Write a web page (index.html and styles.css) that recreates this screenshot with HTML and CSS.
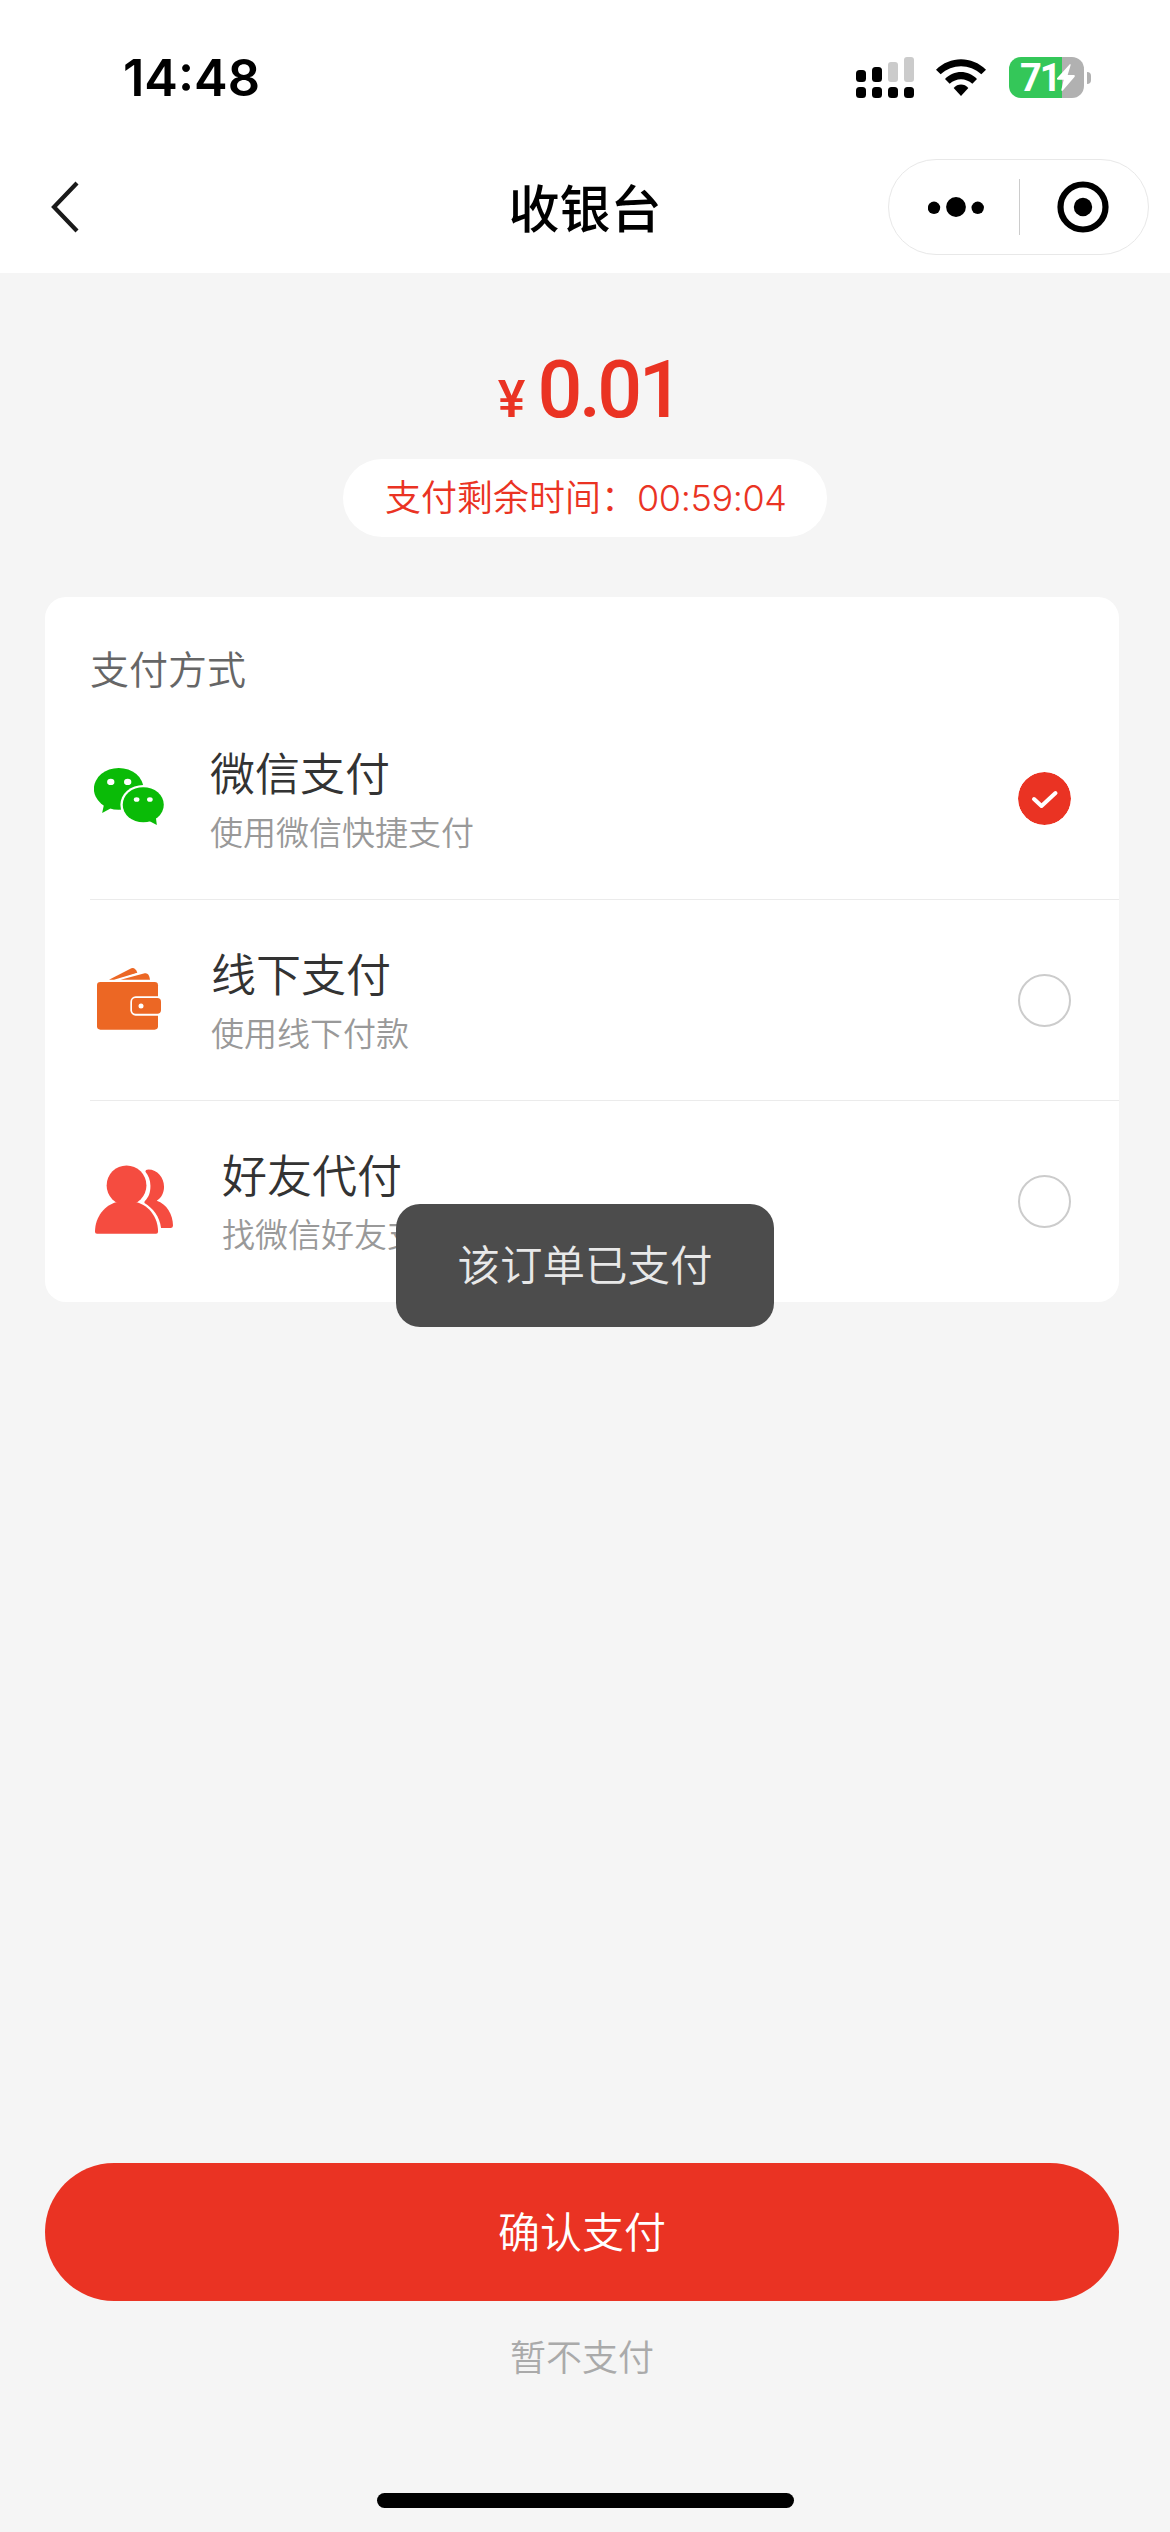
FILE: index.html
```html
<!DOCTYPE html>
<html lang="zh-CN">
  <head>
    <meta charset="UTF-8" />
    <meta name="viewport" content="width=device-width, initial-scale=1.0" />
    <title>收银台</title>
    <link rel="stylesheet" href="styles.css">
  </head>
  <body>
    <header class="header">
      <div class="status">
        <span class="status__time">14:48</span>
        <div class="status__icons">
          <svg class="status__signal" width="58" height="41" viewBox="0 0 58 41">
            <rect x="0" y="13" width="10" height="12" rx="3.5" />
            <rect x="16" y="10" width="10" height="15" rx="3.5" />
            <rect x="32" y="5" width="10" height="20" rx="3" fill="#cbcbcb" />
            <rect x="48" y="0" width="10" height="25" rx="3" fill="#cbcbcb" />
            <rect x="0" y="30" width="10" height="11" rx="3.5" />
            <rect x="16" y="30" width="10" height="11" rx="3.5" />
            <rect x="32" y="30" width="10" height="11" rx="3.5" />
            <rect x="48" y="30" width="10" height="11" rx="3.5" />
          </svg>
          <svg class="status__wifi" width="50" height="37" viewBox="0 0 150 111">
            <path d="M0 32 C42 -10 108 -10 150 32 L136 46 C101 14 49 14 14 46 Z" />
            <path d="M27 60 C54 32 96 32 123 60 L109 74 C89 56 61 56 41 74 Z" />
            <path d="M53 87 C65 73 85 73 97 87 L75 111 Z" />
          </svg>
          <div class="battery">
            <div class="battery__body">
              <span class="battery__num">71</span>
              <svg class="battery__bolt" width="18" height="27" viewBox="0 0 54 81">
                <path d="M39 0 L0 43 Q-1 47 3 47 H20 L13 78 Q14 83 18 79 L53 38 Q55 33 50 33 H32 L41 3 Q41 0 39 0 Z" />
              </svg>
            </div>
            <div class="battery__cap"></div>
          </div>
        </div>
      </div>
      <nav class="nav">
        <svg class="nav__back" width="28" height="52" viewBox="0 0 28 52">
          <path d="M26 2 L3 26 L26 50" />
        </svg>
        <h1 class="nav__title">收银台</h1>
        <div class="capsule">
          <svg class="capsule__more" width="56" height="20" viewBox="0 0 56 20">
            <circle cx="6" cy="10.8" r="6.2" />
            <circle cx="28" cy="10" r="9.9" />
            <circle cx="49.7" cy="10.8" r="6.2" />
          </svg>
          <i class="capsule__line"></i>
          <svg class="capsule__close" width="52" height="52" viewBox="0 0 52 52">
            <circle cx="26" cy="26" r="22.5" fill="none" stroke="#000" stroke-width="6.2" />
            <circle cx="26" cy="26" r="9.2" />
          </svg>
        </div>
      </nav>
    </header>

    <main class="main">
      <p class="price"><span class="price__unit">¥</span><span class="price__num">0.01</span></p>
      <p class="countdown">支付剩余时间：<span class="countdown__time">00:59:04</span></p>

      <section class="card">
        <h2 class="card__title">支付方式</h2>
        <ul class="pay">
          <li class="pay__item">
            <svg class="pay__icon pay__icon--wechat" width="70" height="57" viewBox="192 564 210 172" fill="#0abb07">
              <path d="M222 672 L216 700 L241 686 Z" />
              <ellipse cx="266" cy="627" rx="75" ry="63" />
              <ellipse cx="340" cy="675" rx="69" ry="60" fill="#fff" />
              <path d="M378 712 L381 736 L358 724 Z" />
              <ellipse cx="340" cy="675" rx="62" ry="53" />
              <g fill="#fff">
                <ellipse cx="242" cy="606" rx="11" ry="9.5" />
                <ellipse cx="293" cy="606" rx="11" ry="9.5" />
                <ellipse cx="320" cy="659" rx="8.5" ry="7" />
                <ellipse cx="360" cy="659" rx="8.5" ry="7" />
              </g>
            </svg>
            <div class="pay__text">
              <p class="pay__name">微信支付</p>
              <p class="pay__desc">使用微信快捷支付</p>
            </div>
            <svg class="radio radio--on" width="53" height="53" viewBox="0 0 53 53">
              <circle cx="26.5" cy="26.5" r="26.5" />
              <path d="M16 27 L23.5 34 L37.5 21" />
            </svg>
          </li>
          <li class="pay__item">
            <svg class="pay__icon pay__icon--wallet" width="64" height="63" viewBox="201 137 192 189" fill="#ec6724">
              <path d="M237 175 L304 141 Q315 137 322 154 L252 175 Z" />
              <path d="M262 175 L340 149 L344 156 L280 175 Z" fill="#fff" />
              <path d="M272 175 L344 156 Q357 153 360 175 Z" />
              <rect x="201" y="182" width="183" height="143" rx="10" />
              <rect x="301" y="225" width="100" height="58" rx="16" fill="#fff" />
              <rect x="306" y="230" width="87" height="47" rx="11" />
              <circle cx="333" cy="254" r="7.5" fill="#fff" />
            </svg>
            <div class="pay__text">
              <p class="pay__name">线下支付</p>
              <p class="pay__desc">使用线下付款</p>
            </div>
            <span class="radio"></span>
          </li>
          <li class="pay__item">
            <svg class="pay__icon pay__icon--friend" width="78" height="69" viewBox="194 735 235 207" fill="#f54c40">
              <circle cx="289" cy="796" r="60" />
              <path d="M194 936 C194 890 225 855 258 847 L320 847 C357 857 384 893 384 936 Q384 942 378 942 H200 Q194 942 194 936 Z" />
              <path d="M346 755 Q346 748 355 748 C382 748 402 772 402 800 C402 818 394 834 380 842 C410 852 429 883 429 917 Q429 924 423 924 H393 C389 890 368 864 343 849 Q342 845 345 842 C357 830 361 817 361 797 C361 780 355 766 346 755 Z" />
            </svg>
            <div class="pay__text">
              <p class="pay__name">好友代付</p>
              <p class="pay__desc">找微信好友支付</p>
            </div>
            <span class="radio"></span>
          </li>
        </ul>
      </section>
    </main>

    <footer class="footer">
      <button class="footer__confirm">确认支付</button>
      <a class="footer__cancel">暂不支付</a>
      <div class="home-bar"></div>
    </footer>

    <div class="toast">该订单已支付</div>
  </body>
</html>
```
FILE: styles.css
```css
* {
  box-sizing: border-box;
  margin: 0;
  padding: 0;
}

body {
  background-color: #f5f5f5;
  display: flex;
  flex-direction: column;
  font-family: Inter, "Noto Sans CJK SC", sans-serif;
  font-weight: 350;
  height: 2532px;
  position: relative;
  width: 1170px;
}

svg {
  display: block;
  flex: none;
}

/* header */
.header {
  background-color: #fff;
  height: 273px;
}

.status {
  align-items: center;
  display: flex;
  height: 155px;
  justify-content: space-between;
  padding: 0 79px 0 123px;
}

.status__time {
  font-size: 50.5px;
  font-weight: 600;
}

.status__icons {
  align-items: center;
  display: flex;
}

.status__wifi {
  margin-left: 22px;
}

.battery {
  align-items: center;
  display: flex;
  margin-left: 23px;
}

.battery__body {
  align-items: center;
  background: linear-gradient(90deg, #34c759 53px, #b1b1b1 53px);
  border-radius: 12px;
  color: #fff;
  display: flex;
  height: 41px;
  padding-left: 11px;
  width: 75px;
}

.battery__num {
  font-family: Roboto, sans-serif;
  font-size: 38px;
  font-weight: 700;
  letter-spacing: -2px;
  line-height: 41px;
  padding-top: 2px;
  width: 37px;
}

.battery__bolt {
  fill: #fff;
}

.battery__cap {
  background-color: #b1b1b1;
  border-radius: 0 6px 6px 0;
  height: 12px;
  margin-left: 3px;
  width: 4px;
}

.nav {
  align-items: center;
  display: grid;
  grid-template-columns: 1fr auto 1fr;
  height: 104px;
  padding: 0 21px 0 51px;
}

.nav__back {
  fill: none;
  stroke: #1a1a1a;
  stroke-width: 4.2;
}

.nav__title {
  font-size: 51px;
  font-weight: 500;
  line-height: 60px;
  padding: 5px 30px 0 0;
}

.capsule {
  align-items: center;
  border: 1.5px solid #e8e8e8;
  border-radius: 48px;
  display: flex;
  height: 96px;
  justify-self: end;
  padding-left: 39px;
  width: 261px;
}

.capsule__line {
  background-color: #ccc;
  height: 56px;
  margin: 0 37px 0 35px;
  width: 1px;
}

/* content */
.main {
  flex: 1;
  padding-top: 74px;
}

.price {
  align-items: baseline;
  color: #ea3323;
  display: flex;
  font-family: Roboto, sans-serif;
  font-weight: 500;
  height: 84px;
  justify-content: center;
  line-height: 87px;
  padding-left: 8px;
}

.price__unit {
  font-size: 52px;
  margin-right: 12px;
}

.price__num {
  font-size: 79px;
  letter-spacing: -3.5px;
}

.countdown {
  background-color: #fff;
  border-radius: 39px;
  color: #ea3323;
  font-size: 36px;
  height: 78px;
  line-height: 78px;
  margin: 28px auto 0;
  padding-left: 42px;
  white-space: nowrap;
  width: 484px;
}

.countdown__time {
  font-weight: 300;
  letter-spacing: -0.4px;
}

.card {
  background-color: #fff;
  border-radius: 21px;
  height: 705px;
  margin: 60px 51px 0 45px;
  padding: 45px 0 0 45px;
}

.card__title {
  color: #666;
  font-size: 39px;
  font-weight: 350;
  line-height: 56px;
}

.pay {
  list-style: none;
}

.pay__item {
  align-items: center;
  display: flex;
  height: 201px;
  padding-right: 48px;
}

.pay__item + .pay__item {
  border-top: 1px solid #ebebeb;
}

.pay__icon--wechat {
  margin: 0 46px 4px 4px;
}

.pay__icon--wallet {
  margin: 0 50px 4px 7px;
}

.pay__icon--friend {
  margin: 0 49px 4px 5px;
}

.pay__text {
  flex: 1;
}

.pay__name {
  color: #333;
  font-size: 45px;
  line-height: 68px;
}

.pay__desc {
  color: #999;
  font-size: 33px;
  line-height: 48px;
}

.radio {
  border: 2.5px solid #ccc;
  border-radius: 50%;
  height: 53px;
  width: 53px;
}

.radio--on {
  border: 0;
  fill: #ea3323;
}

.radio--on path {
  fill: none;
  stroke: #fff;
  stroke-linecap: round;
  stroke-linejoin: round;
  stroke-width: 4;
}

/* footer */
.footer {
  align-items: center;
  display: flex;
  flex-direction: column;
  height: 369px;
  padding: 0 51px 0 45px;
}

.footer__confirm {
  background-color: #ea3323;
  border: 0;
  border-radius: 69px;
  color: #fff;
  font-family: inherit;
  font-size: 42px;
  font-weight: 350;
  height: 138px;
  padding-bottom: 5px;
  width: 100%;
}

.footer__cancel {
  color: #aaa;
  font-size: 36px;
  line-height: 52px;
  margin-top: 31px;
}

.home-bar {
  background-color: #000;
  border-radius: 8px;
  height: 15px;
  margin: auto 0 24px 6px;
  width: 417px;
}

.toast {
  background-color: #4c4c4c;
  border-radius: 24px;
  color: #e8e8e8;
  font-size: 42.5px;
  height: 123px;
  left: 396px;
  line-height: 124px;
  position: absolute;
  text-align: center;
  top: 1204px;
  width: 378px;
}
```
